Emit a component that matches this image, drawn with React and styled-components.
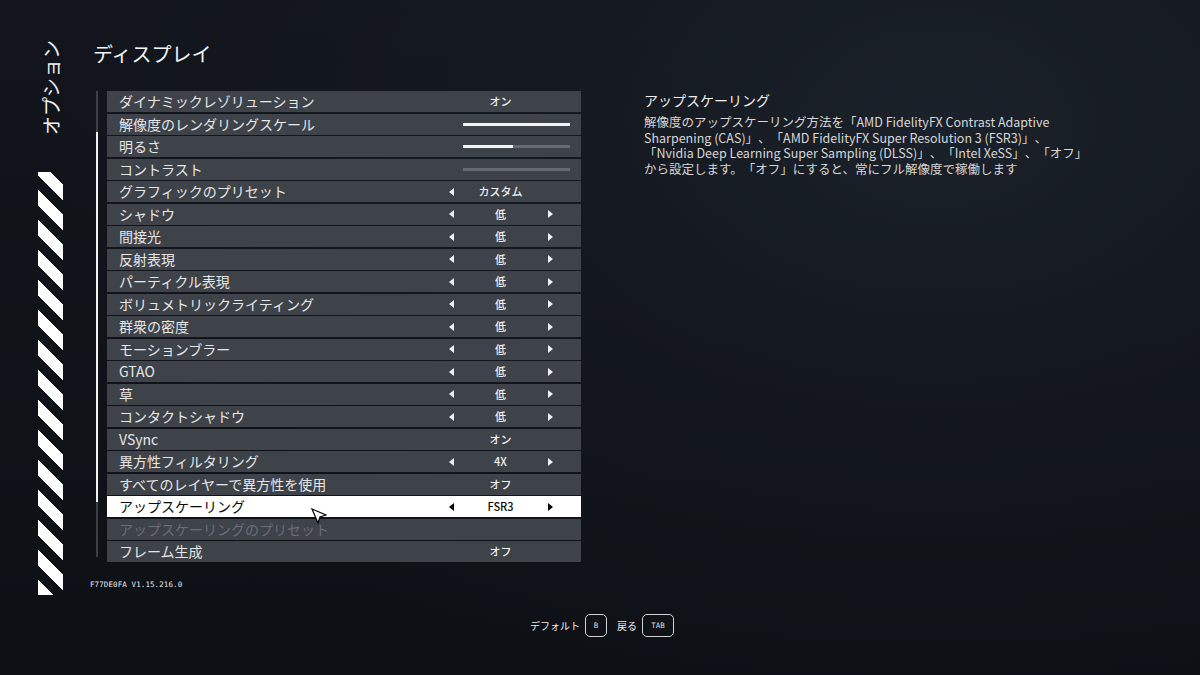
import styled, { createGlobalStyle, css } from 'styled-components';

const GlobalStyle = createGlobalStyle`
  html, body {
    margin: 0;
    padding: 0;
    background: #0d1015;
  }
  #root {
    width: 1200px;
    height: 675px;
    overflow: hidden;
  }
  * {
    box-sizing: border-box;
  }
`;

const JP = `"Noto Sans CJK JP", "Noto Sans", sans-serif`;

const settings = [
  { label: 'ダイナミックレゾリューション', kind: 'value', value: 'オン' },
  { label: '解像度のレンダリングスケール', kind: 'slider', fill: 100 },
  { label: '明るさ', kind: 'slider', fill: 47 },
  { label: 'コントラスト', kind: 'slider', fill: 0 },
  { label: 'グラフィックのプリセット', kind: 'select', value: 'カスタム', noRight: true },
  { label: 'シャドウ', kind: 'select', value: '低' },
  { label: '間接光', kind: 'select', value: '低' },
  { label: '反射表現', kind: 'select', value: '低' },
  { label: 'パーティクル表現', kind: 'select', value: '低' },
  { label: 'ボリュメトリックライティング', kind: 'select', value: '低' },
  { label: '群衆の密度', kind: 'select', value: '低' },
  { label: 'モーションブラー', kind: 'select', value: '低' },
  { label: 'GTAO', kind: 'select', value: '低' },
  { label: '草', kind: 'select', value: '低' },
  { label: 'コンタクトシャドウ', kind: 'select', value: '低' },
  { label: 'VSync', kind: 'value', value: 'オン' },
  { label: '異方性フィルタリング', kind: 'select', value: '4X' },
  { label: 'すべてのレイヤーで異方性を使用', kind: 'value', value: 'オフ' },
  { label: 'アップスケーリング', kind: 'select', value: 'FSR3', active: true },
  { label: 'アップスケーリングのプリセット', kind: 'none', disabled: true },
  { label: 'フレーム生成', kind: 'value', value: 'オフ' },
];

export default function App() {
  return (
    <Screen lang="ja">
      <GlobalStyle />
      <Body>
        <Sidebar>
          <SideTitle>オプション</SideTitle>
          <Stripes />
        </Sidebar>
        <Main>
          <PageTitle>ディスプレイ</PageTitle>
          <Content>
            <ListColumn>
              <ListFrame>
                <ScrollTrack>
                  <ScrollThumb />
                </ScrollTrack>
                <Rows>
                  {settings.map(item => (
                    <Row key={item.label} $active={item.active}>
                      <Label $disabled={item.disabled}>{item.label}</Label>
                      {item.kind === 'slider' && (
                        <Slider>
                          <SliderFill style={{ width: `${item.fill}%` }} />
                        </Slider>
                      )}
                      {item.kind === 'select' && (
                        <Selector>
                          <Arrow $dir="left" $active={item.active} />
                          <Value $active={item.active}>{item.value}</Value>
                          {item.noRight ? <span /> : <Arrow $dir="right" $active={item.active} />}
                        </Selector>
                      )}
                      {item.kind === 'value' && (
                        <Selector>
                          <span />
                          <Value>{item.value}</Value>
                          <span />
                        </Selector>
                      )}
                      {item.active && (
                        <Pointer viewBox="0 0 16 16" width="16" height="16">
                          <polygon
                            points="1,1 15,7 9,9 7,15"
                            fill="#ffffff"
                            stroke="#000000"
                            strokeWidth="1.2"
                            strokeLinejoin="miter"
                          />
                        </Pointer>
                      )}
                    </Row>
                  ))}
                </Rows>
              </ListFrame>
              <Version>F77DE0FA V1.15.216.0</Version>
            </ListColumn>
            <Detail>
              <DetailTitle>アップスケーリング</DetailTitle>
              <DetailText>
                <Line>解像度のアップスケーリング方法を「AMD FidelityFX Contrast Adaptive</Line>
                <Line>Sharpening (CAS)」、「AMD FidelityFX Super Resolution 3 (FSR3)」、</Line>
                <Line>「Nvidia Deep Learning Super Sampling (DLSS)」、「Intel XeSS」、「オフ」</Line>
                <Line>から設定します。「オフ」にすると、常にフル解像度で稼働します</Line>
              </DetailText>
            </Detail>
          </Content>
        </Main>
      </Body>
      <Footer>
        <Hint>デフォルト</Hint>
        <KeyCap $wide={false}>B</KeyCap>
        <Hint $gap>戻る</Hint>
        <KeyCap $wide>TAB</KeyCap>
      </Footer>
    </Screen>
  );
}

const Screen = styled.div`
  width: 1200px;
  height: 675px;
  display: flex;
  flex-direction: column;
  font-family: ${JP};
  color: #e6e6e6;
  text-spacing-trim: space-all;
  background:
    radial-gradient(ellipse 900px 600px at 78% 18%, #1b212a 0%, rgba(22, 27, 34, 0.6) 45%, rgba(13, 16, 21, 0) 100%),
    linear-gradient(180deg, #12161c 0%, #0d1015 100%);
`;

const Body = styled.div`
  display: flex;
  padding: 40px 0 0 38px;
`;

const Sidebar = styled.aside`
  width: 25px;
  margin-right: 27px;
  display: flex;
  flex-direction: column;
  align-items: center;
`;

const SideTitle = styled.div`
  writing-mode: vertical-rl;
  text-orientation: sideways;
  transform: rotate(180deg);
  white-space: nowrap;
  font-size: 19px;
  line-height: 25px;
  height: 95px;
  color: #f2f2f2;
`;

const Stripes = styled.div`
  width: 25px;
  height: 423px;
  margin-top: 37px;
  background: repeating-linear-gradient(
    45deg,
    #ffffff 0px,
    #ffffff 10.8px,
    transparent 10.8px,
    transparent 21.2px
  );
`;

const Main = styled.main`
  display: flex;
  flex-direction: column;
`;

const PageTitle = styled.h1`
  margin: 0 0 23px 3px;
  font-size: 20px;
  line-height: 28px;
  font-weight: 400;
  color: #f4f4f4;
`;

const Content = styled.div`
  display: flex;
  align-items: flex-start;
`;

const ListColumn = styled.div`
  width: 491px;
  display: flex;
  flex-direction: column;
`;

const ListFrame = styled.div`
  display: flex;
  padding-left: 6px;
`;

const ScrollTrack = styled.div`
  width: 2px;
  height: 466px;
  margin-right: 9px;
  background: #3b3f46;
  padding-top: 41px;
`;

const ScrollThumb = styled.div`
  width: 2px;
  height: 370px;
  background: #f2f2f2;
`;

const Rows = styled.div`
  width: 474px;
  display: grid;
  grid-auto-rows: 21px;
  row-gap: 1.5px;
`;

const Row = styled.div`
  position: relative;
  display: flex;
  align-items: center;
  padding-left: 12px;
  background: #3e4249;
  ${p =>
    p.$active &&
    css`
      background: #ffffff;
      color: #0a0a0a;
    `}
`;

const Label = styled.span`
  flex: 1;
  font-size: 14px;
  line-height: 21px;
  white-space: nowrap;
  color: ${p => (p.$disabled ? '#6b6f75' : 'inherit')};
`;

const Slider = styled.div`
  width: 107px;
  height: 3px;
  margin-right: 11px;
  background: #676b71;
`;

const SliderFill = styled.div`
  height: 100%;
  background: #f4f4f4;
`;

const Selector = styled.div`
  width: 111px;
  margin-right: 25px;
  display: grid;
  grid-template-columns: 12px 1fr 12px;
  align-items: center;
  justify-items: center;
`;

const Value = styled.span`
  font-size: 11px;
  font-weight: 500;
  line-height: 21px;
  color: ${p => (p.$active ? '#0a0a0a' : '#f0f0f0')};
`;

const Arrow = styled.span`
  width: 0;
  height: 0;
  border-top: 4px solid transparent;
  border-bottom: 4px solid transparent;
  ${p =>
    p.$dir === 'left'
      ? css`
          border-right: 5px solid ${p.$active ? '#000' : '#f0f0f0'};
        `
      : css`
          border-left: 5px solid ${p.$active ? '#000' : '#f0f0f0'};
        `}
`;

const Pointer = styled.svg`
  position: absolute;
  left: 204px;
  top: 12px;
  z-index: 2;
`;

const Version = styled.div`
  margin-top: 19px;
  font-family: "DejaVu Sans Mono", "Liberation Mono", monospace;
  font-size: 7.5px;
  line-height: 8px;
  color: #e8e8e8;
  letter-spacing: 0.1px;
`;

const Detail = styled.section`
  margin-left: 63px;
  display: flex;
  flex-direction: column;
`;

const DetailTitle = styled.h2`
  margin: 0;
  font-size: 14px;
  line-height: 18px;
  font-weight: 400;
  color: #eeeeee;
`;

const DetailText = styled.div`
  margin-top: 5px;
  display: flex;
  flex-direction: column;
  font-size: 12.5px;
  color: #d6d6d6;
`;

const Line = styled.span`
  display: block;
  height: 15.7px;
  line-height: 15.7px;
  white-space: nowrap;
`;

const Footer = styled.footer`
  margin-top: 19px;
  display: flex;
  justify-content: center;
  align-items: center;
  padding-left: 4px;
`;

const Hint = styled.span`
  font-size: 10px;
  line-height: 23px;
  color: #eeeeee;
  margin-right: 5px;
  margin-left: ${p => (p.$gap ? '10px' : '0')};
`;

const KeyCap = styled.span`
  width: ${p => (p.$wide ? '32px' : '22px')};
  height: 23px;
  display: flex;
  align-items: center;
  justify-content: center;
  border: 1px solid #cfd2d6;
  border-radius: 5px;
  font-family: "DejaVu Sans Mono", monospace;
  font-size: 7.5px;
  color: #dcdcdc;
`;
